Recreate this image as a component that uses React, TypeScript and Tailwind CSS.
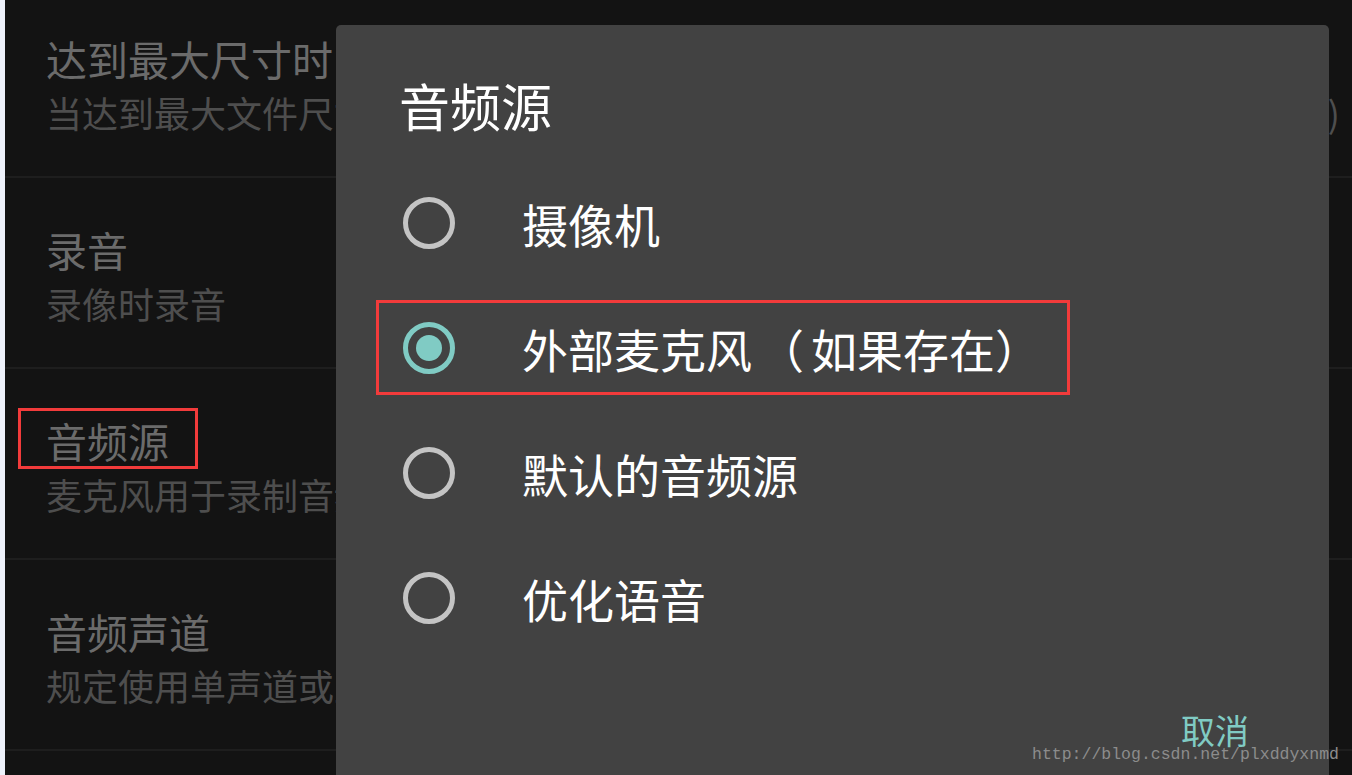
import React from 'react';

type Row = { title: string; summary: string; tail?: string };

const rows: Row[] = [
  { title: '达到最大尺寸时', summary: '当达到最大文件尺寸时停止录制', tail: ')' },
  { title: '录音', summary: '录像时录音' },
  { title: '音频源', summary: '麦克风用于录制音频' },
  { title: '音频声道', summary: '规定使用单声道或立体声' },
];

const options = ['摄像机', '外部麦克风（如果存在）', '默认的音频源', '优化语音'];

const cjk = { fontFamily: '"Noto Sans CJK SC", "Noto Sans", sans-serif' };

function Radio({ checked }: { checked: boolean }) {
  if (checked) {
    return (
      <div className="w-[52px] h-[52px] shrink-0 rounded-full border-[5px] border-[#80cbc4] flex items-center justify-center">
        <div className="w-[26px] h-[26px] rounded-full bg-[#80cbc4]" />
      </div>
    );
  }
  return <div className="w-[52px] h-[52px] shrink-0 rounded-full border-[5px] border-[#c4c4c4]" />;
}

function Label({ text }: { text: string }) {
  const parts = text.split('（');
  if (parts.length === 1) return <>{text}</>;
  return (
    <>
      {parts[0]}
      <span className="pl-[6px] pr-[7px]">（</span>
      {parts[1]}
    </>
  );
}

export default function App() {
  const selected = 1;

  return (
    <div className="relative w-[1352px] h-[775px] overflow-hidden bg-[#131313] flex" style={cjk}>
      <div className="w-[5px] shrink-0 bg-[#eef2fb]" />

      {/* Settings list behind the dialog */}
      <div className="flex-1 flex flex-col -mt-[13px]">
        {rows.map((row) => (
          <div key={row.title} className="h-[191px] shrink-0 border-b-2 border-[#1e1e1e] pt-[51px] pl-[41px] pr-[12px]">
            <div className="text-[41px] leading-none text-[#6b6b6b] whitespace-nowrap">{row.title}</div>
            <div className="mt-[15px] flex justify-between text-[36px] leading-none text-[#4e4e4e] whitespace-nowrap">
              <span>{row.summary}</span>
              {row.tail && <span>{row.tail}</span>}
            </div>
          </div>
        ))}
      </div>

      {/* Dialog */}
      <div className="absolute left-[336px] top-[25px] w-[993px] h-[780px] bg-[#424242] rounded-t-[5px] flex flex-col">
        <div className="h-[135px] pt-[55px] pl-[63px] text-[51px] leading-none text-white">音频源</div>
        <div className="flex flex-col">
          {options.map((opt, i) => (
            <div key={opt} className="h-[125px] flex items-center pl-[67px]">
              <Radio checked={i === selected} />
              <span className="ml-[67px] text-[46px] leading-none text-white whitespace-nowrap">
                <Label text={opt} />
              </span>
            </div>
          ))}
        </div>
        <div className="mt-[53px] flex justify-end pr-[80px]">
          <span className="text-[34px] leading-none text-[#80cbc4]">取消</span>
        </div>
      </div>

      {/* Annotation boxes */}
      <div className="absolute left-[18px] top-[408px] w-[180px] h-[61px] border-[3px] border-[#f23b3b]" />
      <div className="absolute left-[376px] top-[300px] w-[694px] h-[95px] border-[3px] border-[#f23b3b]" />

      {/* Watermark */}
      <div
        className="absolute left-[1032px] top-[747px] text-[16.5px] leading-none text-[#8c8c8c] whitespace-nowrap"
        style={{ fontFamily: '"Liberation Mono", monospace' }}
      >
        http://blog.csdn.net/plxddyxnmd
      </div>
    </div>
  );
}
